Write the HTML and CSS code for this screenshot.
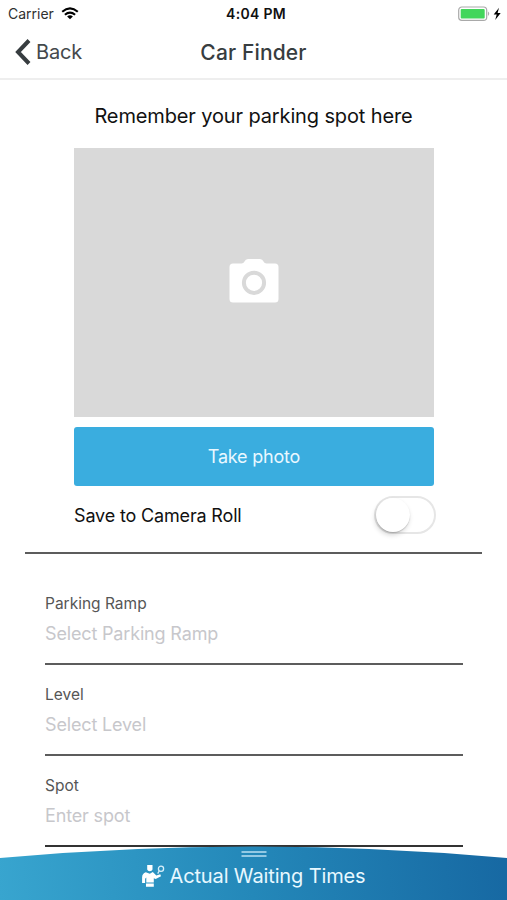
FILE: index.html
```html
<!DOCTYPE html>
<html lang="en">
<head>
<meta charset="utf-8">
<title>Car Finder</title>
<link rel="stylesheet" href="styles.css">
</head>
<body>
<div class="screen">
  <header class="top">
    <div class="status">
      <div class="carrier"><span>Carrier</span>
        <svg class="wifi" width="18" height="13" viewBox="0 0 18 13" fill="none" stroke="#000" stroke-width="2.1"><path d="M1.2 4.800Q9-2 16.800 4.800"/><path d="M3.900 7.800Q9 3.400 14.100 7.800"/><path d="M9 12.300L6.100 9.500Q9 7.200 11.900 9.500Z" fill="#000" stroke="none"/></svg>
      </div>
      <time class="clock">4:04 PM</time>
      <svg class="battery" width="44" height="16" viewBox="0 0 44 16"><rect x=".7" y="1" width="28" height="13.400" rx="3.200" fill="#fff" stroke="#a9a9a9" stroke-width="1.200"/><rect x="2.700" y="3" width="24" height="9.400" rx="1" fill="#42d65b"/><path d="M30.200 5.500q2 2.200 0 4.400z" fill="#999"/><path d="M41 1.800L35.700 8.400h3l-1.500 5.600 5.500-7.100h-3.100z" fill="#000"/></svg>
    </div>
    <nav class="nav">
      <a class="back"><svg width="16" height="26" viewBox="0 0 16 26" fill="none" stroke="#373d40" stroke-width="4"><path d="M14 1.500L3 13l11 11.500"/></svg><span>Back</span></a>
      <h1 class="title">Car Finder</h1>
    </nav>
  </header>
  <main class="content">
    <p class="prompt">Remember your parking spot here</p>
    <div class="photo">
      <svg width="50" height="46" viewBox="0 0 50 46"><path d="M4 5.500h8.500q2 0 3-2Q16.500 1 19 1h12q2.500 0 3.500 2.500 1 2 3 2H46q3.500 0 3.500 3.500v32q0 3.500-3.500 3.500H4Q.5 44.500.5 41V9Q.5 5.500 4 5.500Z" fill="#fff"/><circle cx="25" cy="24.800" r="10.100" fill="none" stroke="#d9d9d9" stroke-width="4"/></svg>
    </div>
    <button class="take">Take photo</button>
    <div class="save"><span>Save to Camera Roll</span><div class="switch"><div class="knob"></div></div></div>
    <hr class="rule">
    <form class="form">
      <div class="field"><label>Parking Ramp</label><div class="value">Select Parking Ramp</div></div>
      <div class="field"><label>Level</label><div class="value">Select Level</div></div>
      <div class="field"><label>Spot</label><div class="value">Enter spot</div></div>
    </form>
  </main>
  <footer class="drawer">
    <svg class="arc" width="507" height="54" viewBox="0 0 507 54"><defs><linearGradient id="g" gradientUnits="userSpaceOnUse" x1="0" y1="54" x2="500" y2="0"><stop offset="0" stop-color="#38a5cf"/><stop offset=".5" stop-color="#2488b9"/><stop offset="1" stop-color="#1769a3"/></linearGradient></defs><path d="M0 12Q253.500-11 507 12V54H0Z" fill="url(#g)"/><path d="M241.500 6h25M241.500 10h25" stroke="#b9dff2" stroke-width="1.500"/></svg>
    <div class="times">
      <svg width="24" height="24" viewBox="0 0 24 24"><path d="M6.200 1h5.300v4.400q-.5 1.800-2.700 1.800T6.200 5.400zM4.800 8.200l4 1.500 3-1.600 3.500 3.400 4-1.300.7 2-5.300 2.700-1.900-.6v4.100H5.300v-4.900l-1.200 1.300v4.100H1.100v-5.500q0-4 3.700-5.200zM5 19.400h7.800v3.300H5z" fill="#fff"/><circle cx="20" cy="4.700" r="2.600" fill="none" stroke="#d7effa" stroke-width="1.300"/><path d="M18.300 6.700l-1.600 2.900" stroke="#d7effa" stroke-width="1.300"/></svg>
      <span>Actual Waiting Times</span>
    </div>
  </footer>
</div>
</body>
</html>
```
FILE: styles.css
```css
* { box-sizing: border-box; }
body { margin: 0; background: #fff; font-family: Inter, "Liberation Sans", sans-serif; color: #111; }
.screen { position: relative; width: 507px; height: 900px; overflow: hidden; }
.top { height: 80px; border-bottom: 2px solid #eee; }
.status { height: 28px; display: grid; grid-template-columns: 1fr auto 1fr; align-items: center; padding: 0 5px 0 8px; }
.carrier { display: flex; align-items: center; gap: 7px; font-size: 14px; line-height: 28px; color: #303030; }
.wifi { margin-bottom: 1px; }
.clock { font-size: 14px; font-weight: 600; letter-spacing: .3px; line-height: 18px; padding-left: 2px; }
.battery { justify-self: end; margin-bottom: 1px; }
.nav { display: grid; grid-template-columns: 1fr auto 1fr; align-items: center; height: 48px; padding: 0 15px; }
.back { display: flex; align-items: center; gap: 5px; font-size: 20px; letter-spacing: -.2px; color: #44494c; }
.title { margin: 0; font-size: 21px; font-weight: 550; letter-spacing: .15px; color: #373d40; }
.content { display: flex; flex-direction: column; }
.prompt { margin: 24px 0 19px; font-size: 20px; line-height: 25px; letter-spacing: -.13px; text-align: center; }
.photo { margin: 0 73px 0 74px; height: 269px; background: #d9d9d9; display: flex; align-items: center; justify-content: center; padding-bottom: 4px; }
.take { margin: 10px 73px 0 74px; height: 59px; padding: 0; border: 0; border-radius: 3px; background: #3aaddf; color: #e9f8ff; font: 18px Inter, sans-serif; letter-spacing: -.2px; }
.save { margin: 9px 71px 0 74px; height: 40px; display: flex; align-items: center; justify-content: space-between; font-size: 18px; letter-spacing: -.16px; }
.switch { width: 62px; height: 38px; border: 2px solid #e6e6e6; border-radius: 19px; }
.knob { width: 34px; height: 34px; border-radius: 50%; background: #fff; box-shadow: -1px 3px 5px rgba(0,0,0,.16), 0 1px 1px rgba(0,0,0,.16); }
.rule { width: 457px; height: 2px; margin: 17px 0 0 25px; border: 0; background: #5c5c5c; }
.form { margin: 29px 44px 0 45px; }
.field { height: 91px; padding-top: 10px; }
.field label { display: block; height: 21px; font-size: 15.500px; line-height: 22px; color: #565656; }
.value { height: 51px; padding-top: 7px; margin-bottom: 9px; font-size: 18px; line-height: 25px; letter-spacing: -.16px; color: #c7c7cb; border-bottom: 2px solid #5c5c5c; }
.field:last-child .value { height: 50.500px; border-color: #333; }
.drawer { position: absolute; left: 0; bottom: 0; width: 507px; height: 54px; display: grid; }
.arc, .times { grid-area: 1 / 1; }
.times { display: flex; align-items: center; justify-content: center; gap: 4px; padding-top: 6px; font-size: 20px; letter-spacing: -.13px; color: #e8f8ff; }
.times svg { margin-bottom: 1px; }
```
